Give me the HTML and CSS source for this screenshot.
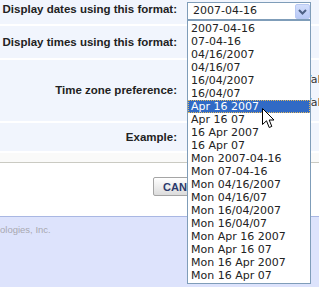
FILE: index.html
```html
<!DOCTYPE html>
<html lang="en">
<head>
    <meta charset="UTF-8">
    <title>Preferences</title>
    <link rel="stylesheet" href="styles.css">
</head>
<body>

<div class="prefs">
    <div class="row row-first">
        <div class="label">Display dates using this format:</div>
        <div class="field">
            <div class="combo">
                <span class="combo-value">2007-04-16</span>
                <span class="combo-btn">
                    <svg width="9" height="6" viewBox="0 0 9 6"><path d="M1 1 L4.5 4.5 L8 1" fill="none" stroke="#4d6185" stroke-width="2"/></svg>
                </span>
                <ul class="combo-list">
                    <li>2007-04-16</li>
                    <li>07-04-16</li>
                    <li>04/16/2007</li>
                    <li>04/16/07</li>
                    <li>16/04/2007</li>
                    <li>16/04/07</li>
                    <li class="selected">Apr 16 2007</li>
                    <li>Apr 16 07</li>
                    <li>16 Apr 2007</li>
                    <li>16 Apr 07</li>
                    <li>Mon 2007-04-16</li>
                    <li>Mon 07-04-16</li>
                    <li>Mon 04/16/2007</li>
                    <li>Mon 04/16/07</li>
                    <li>Mon 16/04/2007</li>
                    <li>Mon 16/04/07</li>
                    <li>Mon Apr 16 2007</li>
                    <li>Mon Apr 16 07</li>
                    <li>Mon 16 Apr 2007</li>
                    <li>Mon 16 Apr 07</li>
                </ul>
            </div>
        </div>
    </div>

    <div class="row row-times">
        <div class="label">Display times using this format:</div>
        <div class="field"></div>
    </div>

    <div class="row row-zone">
        <div class="label">Time zone preference:</div>
        <div class="field">
            <div class="option">Value</div>
            <div class="option">Value</div>
        </div>
    </div>

    <div class="row row-example">
        <div class="label">Example:</div>
        <div class="field"></div>
    </div>
</div>

<div class="strip"></div>

<div class="actions">
    <button type="button">CANCEL</button>
</div>

<div class="footer">ologies, Inc.</div>

<svg class="cursor" width="13" height="21" viewBox="0 0 13 21">
    <path d="M0.5 0.5 L0.5 16.5 L4.5 12.8 L7.2 19.5 L9.8 18.4 L7.2 12 L12 12 Z" fill="#fff" stroke="#000" stroke-width="1" stroke-linejoin="miter"/>
</svg>

</body>
</html>
```

FILE: styles.css
```css
body { margin: 0; font-family: "Liberation Sans", Arial, sans-serif; color: #222; overflow: hidden; background: #fff; }

.prefs { white-space: nowrap; }
.row { display: grid; grid-template-columns: 178px 1fr; column-gap: 9px; align-items: center;
    background: #f1f5fd; margin-bottom: 2px; }
.label { font-weight: bold; font-size: 11.5px; line-height: 13px; text-align: right; padding-right: 1px; }
.field { font-family: "DejaVu Sans", Verdana, sans-serif; font-size: 11px; }

.row-first { height: 24px; align-items: start; }
.row-first .label { padding-top: 3px; }
.row-first .field { padding-top: 2px; }
.row-times { height: 32px; }
.row-zone { height: 61px; }
.row-example { height: 28px; margin-bottom: 0; }

.option { line-height: 23px; padding-left: 117px; color: #333; }

.combo { position: relative; width: 124px; height: 18px; box-sizing: border-box;
    border: 1px solid #7f9db9; background: #fff; z-index: 2; }
.combo-value { display: block; padding-left: 5px; line-height: 16px; color: #222; }
.combo-btn { position: absolute; right: 0; top: 1px; width: 15px; height: 15px; box-sizing: border-box;
    border: 1px solid #b9c9f3; border-radius: 2px; background: linear-gradient(#d3defc, #b8c9f6);
    display: flex; align-items: center; justify-content: center; }
.combo-list { position: absolute; left: -1px; top: 17px; width: 124px; box-sizing: border-box;
    margin: 0; padding: 1px 0; list-style: none; border: 1px solid #7f9db9; background: #fff; }
.combo-list li { height: 13px; line-height: 13px; padding-left: 3px; color: #222; }
.combo-list li.selected { background: #316ac5; color: #fff; outline: 1px dotted #e0b860; outline-offset: -1px; }

.strip { margin-top: 2px; height: 9px; background: #fafaf9; border-bottom: 1px solid #cacac2; }

.actions { display: flex; padding: 14px 0 20px 153px; }
.actions button { height: 19px; padding: 0 9px; border: 1px solid #a5a5a5; border-radius: 2px;
    background: linear-gradient(#fff, #dcdcdc); font-family: "Liberation Sans", Arial, sans-serif;
    font-weight: bold; font-size: 11px; color: #2b3a6c; cursor: pointer; }

.footer { height: 80px; box-sizing: border-box; border-top: 1px solid #a9b7e3; background: #dde3fc;
    padding-top: 7px; font-size: 9.5px; line-height: 12px; color: #a8a8b0; }

.cursor { position: absolute; left: 262px; top: 108px; z-index: 5; }
```
